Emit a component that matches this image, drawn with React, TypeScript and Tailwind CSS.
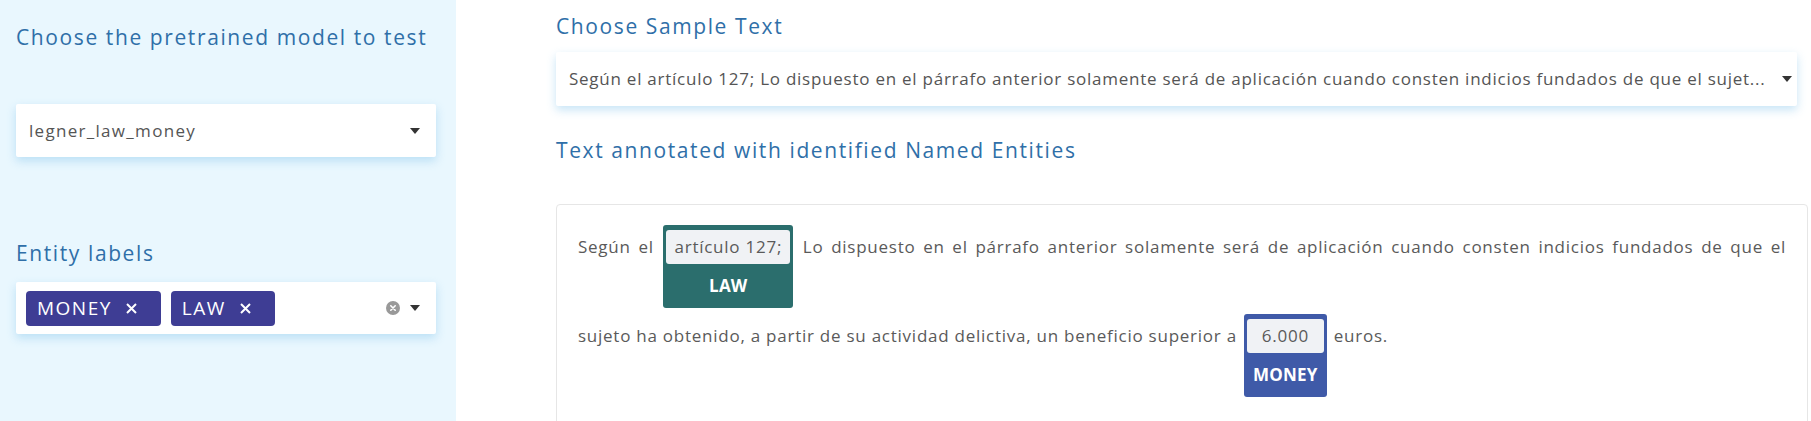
import React from 'react';

const FONT = "font-['Open_Sans',_'Liberation_Sans',_sans-serif]";

function Caret() {
  return (
    <svg width="10" height="6" viewBox="0 0 10 6" className="shrink-0">
      <path d="M0 0 L10 0 L5 6 Z" fill="#333333" />
    </svg>
  );
}

function ClearIcon() {
  return (
    <svg width="14" height="14" viewBox="0 0 14 14" className="shrink-0">
      <circle cx="7" cy="7" r="7" fill="#999999" />
      <path d="M4.8 4.8 L9.2 9.2 M9.2 4.8 L4.8 9.2" stroke="#ffffff" strokeWidth="1.6" strokeLinecap="round" />
    </svg>
  );
}

function Chip({ label }: { label: string }) {
  return (
    <span className="flex items-center gap-[14px] h-[35px] pl-[11px] pr-[24px] rounded-[4px] bg-[#3e3d94] text-white text-[19px] tracking-[1.5px]">
      {label}
      <svg width="11" height="11" viewBox="0 0 11 11">
        <path d="M1 1 L10 10 M10 1 L1 10" stroke="#ffffff" strokeWidth="2" />
      </svg>
    </span>
  );
}

function Entity({ text, label, color }: { text: string; label: string; color: string }) {
  return (
    <span className={`inline-flex flex-col items-stretch align-baseline text-center [text-align-last:center] mx-[2px] my-[3px] px-[3px] pt-[5px] rounded-[3px] ${color}`}>
      <span className="h-[34px] leading-[34px] bg-[#f0f2f5] rounded-[3px] px-[8px] text-[#5a5a5a]">{text}</span>
      <span className="h-[44px] leading-[44px] px-[6px] text-white font-bold tracking-[0.2px]">{label}</span>
    </span>
  );
}

export default function App() {
  return (
    <div className={`flex w-[1811px] h-[421px] overflow-hidden bg-white ${FONT}`}>
      {/* Sidebar */}
      <div className="w-[456px] shrink-0 bg-[#e9f7fe] pl-4 pr-5 pt-[22px]">
        <h2 className="text-[21px] font-medium tracking-[1.6px] text-[#2f6fa8] leading-[30px] whitespace-nowrap">
          Choose the pretrained model to test
        </h2>
        <div className="mt-[52px] h-[53px] bg-white rounded-[2px] flex items-center justify-between pl-[13px] pr-[16px] shadow-[0_4px_10px_rgba(130,195,235,0.45)]">
          <span className="text-[17px] tracking-[1.3px] text-[#555555]">legner_law_money</span>
          <Caret />
        </div>
        <h2 className="mt-[81px] text-[21px] font-medium tracking-[1.6px] text-[#2f6fa8] leading-[30px]">Entity labels</h2>
        <div className="mt-[14px] h-[52px] bg-white rounded-[2px] flex items-center pl-[10px] pr-[16px] shadow-[0_4px_10px_rgba(130,195,235,0.45)]">
          <div className="flex gap-[10px]">
            <Chip label="MONEY" />
            <Chip label="LAW" />
          </div>
          <div className="ml-auto flex items-center gap-[10px]">
            <ClearIcon />
            <Caret />
          </div>
        </div>
      </div>

      {/* Main */}
      <div className="flex-1 pl-[100px] pr-[3px] pt-[11px]">
        <h2 className="text-[21px] font-medium tracking-[1.6px] text-[#2f6fa8] leading-[30px]">Choose Sample Text</h2>
        <div className="mt-[11px] mr-[11px] h-[54px] bg-white rounded-[2px] flex items-center justify-between pl-[13px] pr-[5px] shadow-[0_4px_10px_rgba(130,195,235,0.45)]">
          <span className="text-[17px] tracking-[0.75px] text-[#555555] whitespace-nowrap">
            Según el artículo 127; Lo dispuesto en el párrafo anterior solamente será de aplicación cuando consten indicios fundados de que el sujet...
          </span>
          <Caret />
        </div>
        <h2 className="mt-[29px] text-[21px] font-medium tracking-[1.6px] text-[#2f6fa8] leading-[30px]">
          Text annotated with identified Named Entities
        </h2>
        <div className="mt-[39px] h-[240px] border border-[#e6e6e6] rounded-[4px] pl-[21px] pr-[21px] pt-[17px] text-[17px] tracking-[0.75px] text-[#5a5a5a]">
          <div className="text-justify [text-align-last:justify]">
            Según el{' '}
            <Entity text="artículo 127;" label="LAW" color="bg-[#2b6e6d]" />{' '}
            Lo dispuesto en el párrafo anterior solamente será de aplicación cuando consten indicios fundados de que el
          </div>
          <div>
            sujeto ha obtenido, a partir de su actividad delictiva, un beneficio superior a{' '}
            <Entity text="6.000" label="MONEY" color="bg-[#3f5aa8]" />{' '}
            euros.
          </div>
        </div>
      </div>
    </div>
  );
}
